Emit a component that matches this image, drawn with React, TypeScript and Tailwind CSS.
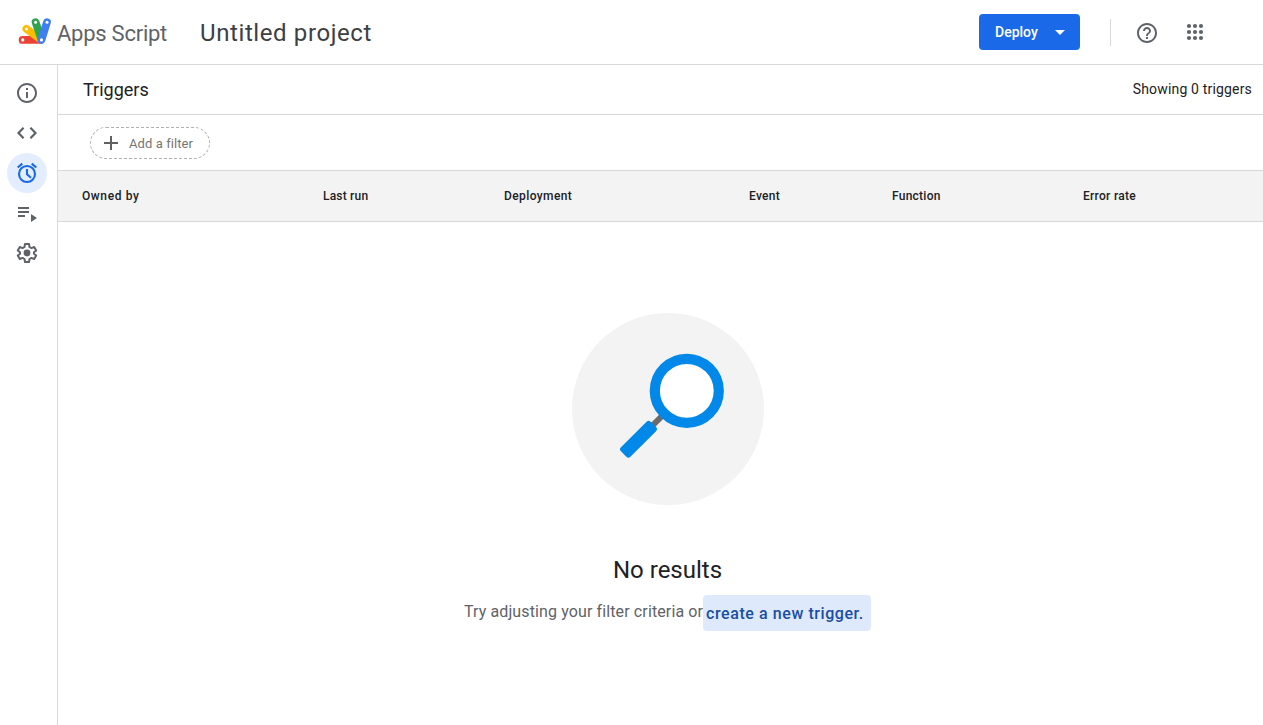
import React from "react";
import { MdInfoOutline, MdHelpOutline, MdArrowDropDown, MdAdd } from "react-icons/md";

function Logo() {
  return (
    <svg width="36" height="32" viewBox="0 0 36 32" fill="none" strokeLinecap="round" strokeWidth="7.8" className="shrink-0">
      <path d="M6.6 23.9H24" stroke="#ea4335" />
      <path d="M10.4 12.9L24.4 23.2" stroke="#fbbc04" />
      <path d="M19.6 6.2L25.2 22.6" stroke="#2fa350" />
      <path d="M31 6.2L25.5 23.9" stroke="#3f7ff2" />
      <g fill="#fff">
        <circle cx="6.8" cy="23.9" r="1.6" />
        <circle cx="10.5" cy="13" r="1.5" />
        <circle cx="19.6" cy="6.2" r="1.5" />
        <circle cx="31" cy="6.2" r="1.5" />
        <circle cx="25.5" cy="23.9" r="1.6" />
      </g>
    </svg>
  );
}

function AppsGrid() {
  const steps = [6, 12, 18];
  return (
    <svg width="24" height="24" viewBox="0 0 24 24" fill="#5f6368">
      {steps.flatMap((y) => steps.map((x) => <circle key={`${x}-${y}`} cx={x} cy={y} r="2.1" />))}
    </svg>
  );
}

function Code() {
  return (
    <svg width="24" height="24" viewBox="0 0 24 24" fill="none" stroke="#5f6368" strokeWidth="2.2">
      <path d="M8.6 6.8L3.5 12l5.1 5.2M15.4 6.8l5.1 5.2-5.1 5.2" />
    </svg>
  );
}

function Alarm() {
  return (
    <svg width="24" height="24" viewBox="0 0 24 24" fill="none" stroke="currentColor" strokeWidth="2.1">
      <circle cx="12" cy="13" r="8" />
      <path d="M12 8v5.2l4 3.6M2.7 6.5l4.6-3.9M21.3 6.5l-4.6-3.9" />
    </svg>
  );
}

function Executions() {
  return (
    <svg width="24" height="24" viewBox="0 0 24 24" fill="#5f6368">
      <path d="M3 6h11v2H3zM3 10h11v2H3zM3 14h7v2H3zM16 13v8l6-4z" />
    </svg>
  );
}

function Gear() {
  return (
    <svg width="24" height="24" viewBox="0 0 24 24" fill="none">
      <path
        d="M10 3h4l.5 3 1.9 1.1 2.8-1.1 2 3.4L19 11.2v1.6l2.2 1.8-2 3.4-2.8-1.1-1.9 1.1-.5 3h-4l-.5-3-1.9-1.1L4.800 18l-2-3.400L5 12.800v-1.600L2.800 9.400l2-3.400 2.800 1.100L9.500 6z"
        stroke="#5f6368"
        strokeWidth="2"
        strokeLinejoin="round"
      />
      <circle cx="12" cy="12" r="3.4" fill="#5f6368" />
    </svg>
  );
}

function Magnifier() {
  return (
    <svg width="192" height="192" viewBox="0 0 192 192">
      <circle cx="96" cy="96" r="96" fill="#f3f3f3" />
      <path d="M80 113L91 102" stroke="#6b6b6b" strokeWidth="6" />
      <circle cx="114.8" cy="77.8" r="32" fill="#fff" stroke="#0288e9" strokeWidth="10.2" />
      <rect x="-21" y="-6.7" width="42" height="13.4" rx="2.9" fill="#0288e9" transform="translate(66.5 126.2) rotate(-45)" />
    </svg>
  );
}

function NavItem({ active, children }: { active?: boolean; children: React.ReactNode }) {
  return (
    <button className={`flex size-10 items-center justify-center rounded-full ${active ? "bg-[#e4edfd] text-[#1a6ae8]" : "text-[#5f6368]"}`}>
      {children}
    </button>
  );
}

export default function App() {
  return (
    <div className="flex h-[725px] w-full flex-col overflow-hidden bg-white font-['Roboto',sans-serif] text-[#202124]">
      <header className="flex h-[65px] shrink-0 items-center border-b border-[#d6d8dc] pb-px pl-4">
        <Logo />
        <span className="ml-[5px] w-[143px] whitespace-nowrap pt-1 text-[22px] tracking-[-0.25px] text-[#5f6368]">Apps Script</span>
        <h1 className="whitespace-nowrap pt-0.5 text-2xl tracking-[0.6px] text-[#3c4043]">Untitled project</h1>
        <button className="ml-auto flex h-9 w-[101px] items-center rounded bg-[#1a69e8] pl-4 text-sm font-medium text-white">
          <span className="w-[53px] text-left">Deploy</span>
          <MdArrowDropDown size={24} />
        </button>
        <div className="ml-[30px] mt-px h-[27px] w-px bg-[#d6d8dc]" />
        <MdHelpOutline size={24} className="ml-6 mt-0.5 text-[#5f6368]" />
        <div className="ml-6 mr-14 flex">
          <AppsGrid />
        </div>
      </header>
      <div className="flex min-h-0 flex-1">
        <nav className="flex w-[58px] shrink-0 flex-col border-r border-[#d6d8dc] pl-[7px] pt-2">
          <NavItem><MdInfoOutline size={24} /></NavItem>
          <NavItem><Code /></NavItem>
          <NavItem active><Alarm /></NavItem>
          <NavItem><Executions /></NavItem>
          <NavItem><Gear /></NavItem>
        </nav>
        <main className="flex min-w-0 flex-1 flex-col">
          <div className="flex h-[50px] shrink-0 items-center justify-between border-b border-[#d6d8dc] pl-[25px] pr-[11px]">
            <h2 className="text-lg">Triggers</h2>
            <span className="-mt-0.5 text-sm tracking-[0.17px]">Showing 0 triggers</span>
          </div>
          <div className="flex h-14 shrink-0 items-center border-b border-[#d6d8dc] pl-8">
            <button className="flex h-8 w-[120px] items-center rounded-full border border-dashed border-[#b0b0b0] pl-2 text-[13px] tracking-[0.08px] text-[#757575]">
              <MdAdd size={24} className="text-[#616161]" />
              <span className="ml-1.5 mt-0.5 whitespace-nowrap">Add a filter</span>
            </button>
          </div>
          <div className="flex h-[51px] shrink-0 items-center border-b border-[#d6d8dc] bg-[#f3f3f3] pl-6 text-xs font-medium">
            <span className="w-[241px] tracking-[0.6px]">Owned by</span>
            <span className="w-[181px] tracking-[0.2px]">Last run</span>
            <span className="w-[245px] tracking-[0.4px]">Deployment</span>
            <span className="w-[143px] tracking-[0.3px]">Event</span>
            <span className="w-[191px] tracking-[0.25px]">Function</span>
            <span className="tracking-[0.3px]">Error rate</span>
          </div>
          <section className="flex flex-col items-center pl-[15px] pt-[91px]">
            <Magnifier />
            <h3 className="mr-px mt-[49px] text-2xl leading-8">No results</h3>
            <div className="mr-px mt-[9px] flex items-center text-base">
              <span className="-mt-0.5 whitespace-nowrap tracking-[0.12px] text-[#5f6368]">Try adjusting your filter criteria or</span>
              <button className="h-9 w-[168px] whitespace-nowrap rounded bg-[#dfe9fc] pl-[3px] pt-0.5 text-left font-medium tracking-[0.57px] text-[#174ea6]">create a new trigger.</button>
            </div>
          </section>
        </main>
      </div>
    </div>
  );
}
